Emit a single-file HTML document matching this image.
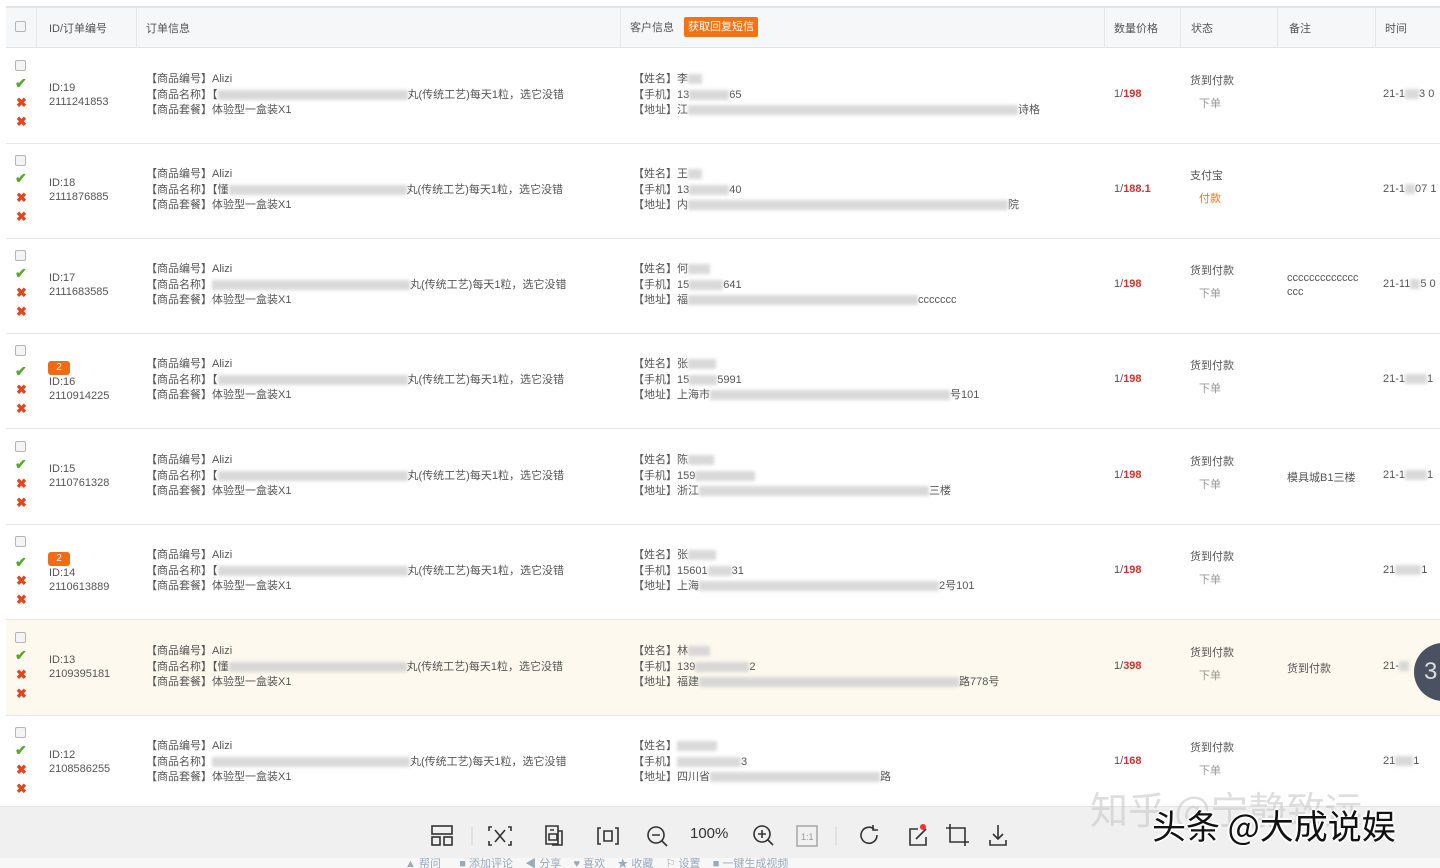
<!DOCTYPE html><html><head><meta charset="utf-8"><style>
*{margin:0;padding:0;box-sizing:border-box}
body{width:1440px;height:868px;overflow:hidden;background:#fff;font-family:"Liberation Sans","Noto Sans CJK SC",sans-serif;font-size:11px;color:#555;position:relative}
.a{position:absolute;white-space:nowrap}
.hd{position:absolute;left:6px;top:6px;width:1434px;height:42px;background:#f6f7f9;border-top:2px solid #e4e4e4;border-bottom:1px solid #e2e2e2}
.vl{position:absolute;top:6px;height:42px;width:1px;background:#e6e6e6}
.row{position:absolute;left:6px;width:1434px;height:96px;border-bottom:1px solid #e6e6e6}
.cb{position:absolute;left:9px;width:11px;height:11px;border:1px solid #b5b5b5;border-radius:2px;background:#f4f4f4}
.ck{position:absolute;left:9px;color:#5aa82a;font-size:14px;font-weight:bold}
.x{position:absolute;left:10px;color:#e2461c;font-size:13px;font-weight:bold}
.bl{display:inline-block;height:10px;background:#cfcfcf;vertical-align:middle;filter:blur(1.5px);opacity:.8}
.r{color:#d0302c;font-weight:bold}
.bd{position:absolute;left:42px;width:22px;height:14px;background:#f26b12;color:#fff;border-radius:3px;font-size:10px;text-align:center;line-height:14px}
</style></head><body>
<div class="hd"></div>
<div class="vl" style="left:36px"></div><div class="vl" style="left:136px"></div><div class="vl" style="left:620px"></div><div class="vl" style="left:1104px"></div><div class="vl" style="left:1180px"></div><div class="vl" style="left:1277px"></div><div class="vl" style="left:1375px"></div>
<div class="cb" style="left:15px;top:21px"></div>
<div class="a" style="left:49px;top:20px;font-size:11px">ID/订单编号</div>
<div class="a" style="left:146px;top:20px">订单信息</div>
<div class="a" style="left:630px;top:19px">客户信息</div>
<div class="a" style="left:684px;top:17px;width:74px;height:20px;background:#f27214;color:#fff;line-height:20px;text-align:center;border-radius:2px">获取回复短信</div>
<div class="a" style="left:1114px;top:20px">数量价格</div>
<div class="a" style="left:1191px;top:20px">状态</div>
<div class="a" style="left:1289px;top:20px">备注</div>
<div class="a" style="left:1385px;top:20px">时间</div>

<!-- rows -->
<div class="row" style="top:48px"><div class="cb" style="top:12px"></div><div class="ck" style="top:27px">✔</div><div class="x" style="top:47px">✖</div><div class="x" style="top:66px">✖</div>
<div class="a" style="left:43px;top:33px;line-height:14px">ID:19<br>2111241853</div>
<div class="a" style="left:140px;top:24px;line-height:15.5px">【商品编号】Alizi<br>【商品名称】【<span class="bl" style="width:190px"></span>丸(传统工艺)每天1粒，选它没错<br>【商品套餐】体验型一盒装X1</div>
<div class="a" style="left:627px;top:24px;line-height:15.5px">【姓名】李<span class="bl" style="width:14px"></span><br>【手机】13<span class="bl" style="width:40px"></span>65<br>【地址】江<span class="bl" style="width:330px"></span>诗格</div>
<div class="a" style="left:1108px;top:40px">1/<span class="r">198</span></div>
<div class="a" style="left:1184px;top:24px">货到付款</div><div class="a" style="left:1193px;top:47px;color:#999">下单</div>
<div class="a" style="left:1377px;top:40px">21-1<span class="bl" style="width:14px"></span>3 0</div></div>

<div class="row" style="top:143px"><div class="cb" style="top:12px"></div><div class="ck" style="top:27px">✔</div><div class="x" style="top:47px">✖</div><div class="x" style="top:66px">✖</div>
<div class="a" style="left:43px;top:33px;line-height:14px">ID:18<br>2111876885</div>
<div class="a" style="left:140px;top:24px;line-height:15.5px">【商品编号】Alizi<br>【商品名称】【懂<span class="bl" style="width:178px"></span>丸(传统工艺)每天1粒，选它没错<br>【商品套餐】体验型一盒装X1</div>
<div class="a" style="left:627px;top:24px;line-height:15.5px">【姓名】王<span class="bl" style="width:14px"></span><br>【手机】13<span class="bl" style="width:40px"></span>40<br>【地址】内<span class="bl" style="width:320px"></span>院</div>
<div class="a" style="left:1108px;top:40px">1/<span class="r">188.1</span></div>
<div class="a" style="left:1184px;top:24px">支付宝</div><div class="a" style="left:1193px;top:47px;color:#f27214">付款</div>
<div class="a" style="left:1377px;top:40px">21-1<span class="bl" style="width:10px"></span>07 1</div></div>

<div class="row" style="top:238px"><div class="cb" style="top:12px"></div><div class="ck" style="top:27px">✔</div><div class="x" style="top:47px">✖</div><div class="x" style="top:66px">✖</div>
<div class="a" style="left:43px;top:33px;line-height:14px">ID:17<br>2111683585</div>
<div class="a" style="left:140px;top:24px;line-height:15.5px">【商品编号】Alizi<br>【商品名称】<span class="bl" style="width:198px"></span>丸(传统工艺)每天1粒，选它没错<br>【商品套餐】体验型一盒装X1</div>
<div class="a" style="left:627px;top:24px;line-height:15.5px">【姓名】何<span class="bl" style="width:22px"></span><br>【手机】15<span class="bl" style="width:34px"></span>641<br>【地址】福<span class="bl" style="width:230px"></span>ccccccc</div>
<div class="a" style="left:1108px;top:40px">1/<span class="r">198</span></div>
<div class="a" style="left:1184px;top:24px">货到付款</div><div class="a" style="left:1193px;top:47px;color:#999">下单</div>
<div class="a" style="left:1281px;top:33px;line-height:14px">ccccccccccccc<br>ccc</div>
<div class="a" style="left:1377px;top:40px">21-11<span class="bl" style="width:10px"></span>5 0</div></div>

<div class="row" style="top:333px"><div class="cb" style="top:12px"></div><div class="bd" style="left:42px;top:28px">2</div><div class="ck" style="top:30px">✔</div><div class="x" style="top:49px">✖</div><div class="x" style="top:68px">✖</div>
<div class="a" style="left:43px;top:42px;line-height:14px">ID:16<br>2110914225</div>
<div class="a" style="left:140px;top:24px;line-height:15.5px">【商品编号】Alizi<br>【商品名称】【<span class="bl" style="width:190px"></span>丸(传统工艺)每天1粒，选它没错<br>【商品套餐】体验型一盒装X1</div>
<div class="a" style="left:627px;top:24px;line-height:15.5px">【姓名】张<span class="bl" style="width:28px"></span><br>【手机】15<span class="bl" style="width:28px"></span>5991<br>【地址】上海市<span class="bl" style="width:240px"></span>号101</div>
<div class="a" style="left:1108px;top:40px">1/<span class="r">198</span></div>
<div class="a" style="left:1184px;top:24px">货到付款</div><div class="a" style="left:1193px;top:47px;color:#999">下单</div>
<div class="a" style="left:1377px;top:40px">21-1<span class="bl" style="width:22px"></span>1</div></div>

<div class="row" style="top:429px"><div class="cb" style="top:12px"></div><div class="ck" style="top:27px">✔</div><div class="x" style="top:47px">✖</div><div class="x" style="top:66px">✖</div>
<div class="a" style="left:43px;top:33px;line-height:14px">ID:15<br>2110761328</div>
<div class="a" style="left:140px;top:24px;line-height:15.5px">【商品编号】Alizi<br>【商品名称】【<span class="bl" style="width:190px"></span>丸(传统工艺)每天1粒，选它没错<br>【商品套餐】体验型一盒装X1</div>
<div class="a" style="left:627px;top:24px;line-height:15.5px">【姓名】陈<span class="bl" style="width:26px"></span><br>【手机】159<span class="bl" style="width:60px"></span><br>【地址】浙江<span class="bl" style="width:230px"></span>三楼</div>
<div class="a" style="left:1108px;top:40px">1/<span class="r">198</span></div>
<div class="a" style="left:1184px;top:24px">货到付款</div><div class="a" style="left:1193px;top:47px;color:#999">下单</div>
<div class="a" style="left:1281px;top:40px">模具城B1三楼</div>
<div class="a" style="left:1377px;top:40px">21-1<span class="bl" style="width:22px"></span>1</div></div>

<div class="row" style="top:524px"><div class="cb" style="top:12px"></div><div class="bd" style="left:42px;top:28px">2</div><div class="ck" style="top:30px">✔</div><div class="x" style="top:49px">✖</div><div class="x" style="top:68px">✖</div>
<div class="a" style="left:43px;top:42px;line-height:14px">ID:14<br>2110613889</div>
<div class="a" style="left:140px;top:24px;line-height:15.5px">【商品编号】Alizi<br>【商品名称】【<span class="bl" style="width:190px"></span>丸(传统工艺)每天1粒，选它没错<br>【商品套餐】体验型一盒装X1</div>
<div class="a" style="left:627px;top:24px;line-height:15.5px">【姓名】张<span class="bl" style="width:28px"></span><br>【手机】15601<span class="bl" style="width:24px"></span>31<br>【地址】上海<span class="bl" style="width:240px"></span>2号101</div>
<div class="a" style="left:1108px;top:40px">1/<span class="r">198</span></div>
<div class="a" style="left:1184px;top:24px">货到付款</div><div class="a" style="left:1193px;top:47px;color:#999">下单</div>
<div class="a" style="left:1377px;top:40px">21<span class="bl" style="width:26px"></span>1</div></div>

<div class="row" style="top:620px;background:#fdf9ee"><div class="cb" style="top:12px"></div><div class="ck" style="top:27px">✔</div><div class="x" style="top:47px">✖</div><div class="x" style="top:66px">✖</div>
<div class="a" style="left:43px;top:33px;line-height:14px">ID:13<br>2109395181</div>
<div class="a" style="left:140px;top:24px;line-height:15.5px">【商品编号】Alizi<br>【商品名称】【懂<span class="bl" style="width:178px"></span>丸(传统工艺)每天1粒，选它没错<br>【商品套餐】体验型一盒装X1</div>
<div class="a" style="left:627px;top:24px;line-height:15.5px">【姓名】林<span class="bl" style="width:22px"></span><br>【手机】139<span class="bl" style="width:54px"></span>2<br>【地址】福建<span class="bl" style="width:260px"></span>路778号</div>
<div class="a" style="left:1108px;top:40px">1/<span class="r">398</span></div>
<div class="a" style="left:1184px;top:24px">货到付款</div><div class="a" style="left:1193px;top:47px;color:#999">下单</div>
<div class="a" style="left:1281px;top:40px">货到付款</div>
<div class="a" style="left:1377px;top:40px">21-<span class="bl" style="width:10px"></span></div></div>

<div class="row" style="top:715px;height:92px;border-bottom:none"><div class="cb" style="top:12px"></div><div class="ck" style="top:27px">✔</div><div class="x" style="top:47px">✖</div><div class="x" style="top:66px">✖</div>
<div class="a" style="left:43px;top:33px;line-height:14px">ID:12<br>2108586255</div>
<div class="a" style="left:140px;top:24px;line-height:15.5px">【商品编号】Alizi<br>【商品名称】<span class="bl" style="width:198px"></span>丸(传统工艺)每天1粒，选它没错<br>【商品套餐】体验型一盒装X1</div>
<div class="a" style="left:627px;top:24px;line-height:15.5px">【姓名】<span class="bl" style="width:40px"></span><br>【手机】<span class="bl" style="width:64px"></span>3<br>【地址】四川省<span class="bl" style="width:170px"></span>路</div>
<div class="a" style="left:1108px;top:40px">1/<span class="r">168</span></div>
<div class="a" style="left:1184px;top:24px">货到付款</div><div class="a" style="left:1193px;top:47px;color:#999">下单</div>
<div class="a" style="left:1377px;top:40px">21<span class="bl" style="width:18px"></span>1</div></div>

<div class="a" style="left:1414px;top:643px;width:60px;height:58px;border-radius:29px;background:#4a5160;color:#ddd;font-size:24px;line-height:58px;padding-left:10px">3</div>

<!-- toolbar -->
<div class="a" style="left:0;top:806px;width:1440px;height:52px;background:#f0f0f0;border-top:1px solid #e4e4e4"></div>
<div class="a" style="left:0;top:858px;width:1440px;height:10px;background:#f7f7f7;font-size:11px;color:#9ab;line-height:12px;padding-left:405px;overflow:hidden">▲ 帮问 &nbsp;&nbsp;&nbsp;&nbsp; ■ 添加评论 &nbsp;&nbsp; ◀ 分享 &nbsp;&nbsp; ♥ 喜欢 &nbsp;&nbsp; ★ 收藏 &nbsp;&nbsp; ⚐ 设置 &nbsp;&nbsp; ■ 一键生成视频</div>
<svg class="a" style="left:420px;top:815px" width="610" height="40" fill="none" stroke="#333" stroke-width="1.6">
<rect x="12" y="11" width="20" height="8"/><rect x="12" y="22" width="8" height="8"/><rect x="24" y="22" width="8" height="8"/>
<line x1="52" y1="12" x2="52" y2="30" stroke="#ddd"/>
<path d="M72 12h-3v4M72 30h-3v-4M88 12h3v4M88 30h3v-4M75 15l10 12M85 15l-10 12"/>
<path d="M126 11h12v18h-12z M130 15h4M129 19h8v6h-8z"/><path d="M138 16h4v14h-10"/>
<path d="M181 13h-3v16h3M195 13h3v16h-3M184 16h8v10h-8z"/>
<circle cx="236" cy="20" r="8"/><path d="M232 20h8M242 26l5 5"/>
<circle cx="342" cy="19" r="8"/><path d="M338 19h8M342 15v8M348 25l5 5"/>
<rect x="377" y="11" width="20" height="20" stroke="#aaa"/><text x="381" y="25" font-size="9" fill="#999" stroke="none" font-family="Liberation Sans">1:1</text>
<line x1="416" y1="12" x2="416" y2="30" stroke="#ddd"/>
<path d="M454 14a8 8 0 1 0 3 6M453 10v5h5"/>
<path d="M498 14h-8v16h16v-8M496 24l10-10"/><circle cx="503" cy="12" r="3" fill="#e33" stroke="none"/>
<path d="M530 9v18h19M526 13h19v18"/>
<path d="M578 10v14M573 19l5 5 5-5M570 25v5h16v-5"/>
</svg>
<div class="a" style="left:690px;top:825px;font-size:15px;color:#333">100%</div>
<div class="a" style="left:1090px;top:780px;font-size:38px;color:rgba(200,200,200,.6);font-family:'Noto Sans CJK SC',sans-serif">知乎 @宁静致远</div>
<div class="a" style="left:1152px;top:800px;font-size:34px;color:#111;font-family:'Noto Sans CJK SC',sans-serif;text-shadow:-2px 0 #fff,2px 0 #fff,0 -2px #fff,0 2px #fff">头条 @大成说娱</div>
</body></html>
